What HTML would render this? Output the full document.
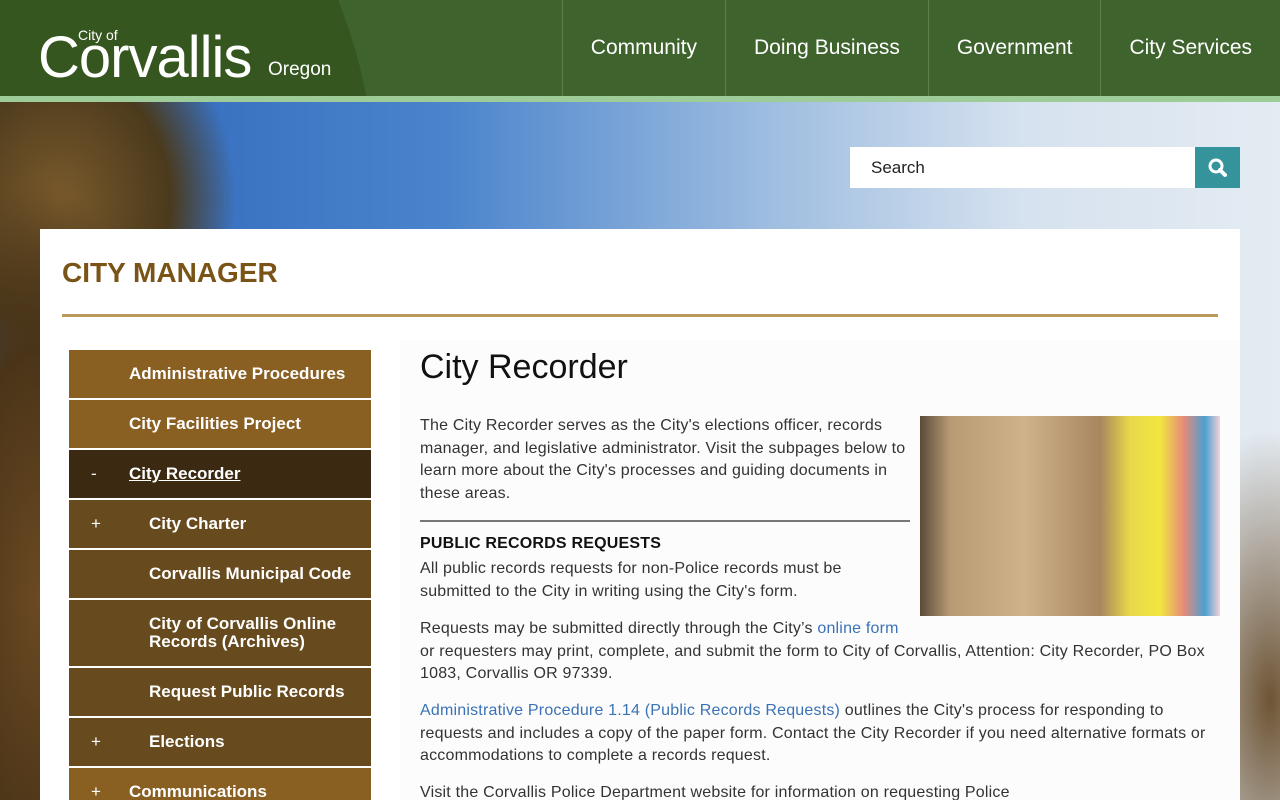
<!DOCTYPE html>
<html><head><meta charset="utf-8"><style>
*{margin:0;padding:0;box-sizing:border-box}
html,body{width:1280px;height:800px;overflow:hidden}
body{font-family:"Liberation Sans",sans-serif;position:relative;
background:
radial-gradient(ellipse 140px 420px at 40px 600px,#6b4a22 0%,#4a3418 60%,transparent 100%),
radial-gradient(ellipse 220px 260px at 60px 200px,#7a5a2c 0%,#4b3a1c 50%,transparent 80%),
radial-gradient(ellipse 120px 300px at 1270px 700px,#6e5434 0%,transparent 90%),
linear-gradient(90deg,#2a62b8 0%,#4b84cc 35%,#9ebde0 60%,#d6e2ef 80%,#e4ebf2 100%);}
.hdr{position:absolute;left:0;top:0;width:1280px;height:96px;background:#3f632d;overflow:hidden}
.hdr .curve{position:absolute;left:-190px;top:-200px;width:566px;height:400px;background:#36561f;border-radius:0 50% 0 0/0 100% 0 0}
.stripe{position:absolute;left:0;top:96px;width:1280px;height:6px;background:#9dcc98}
.logo{position:absolute;left:38px;top:22px;color:#fff;white-space:nowrap}
.logo .c{font-size:58px;font-weight:normal;letter-spacing:-1px;position:absolute;left:0;top:6px;line-height:60px}
.logo .of{position:absolute;left:40px;top:5px;font-size:14px}
.logo .or{position:absolute;left:230px;top:37px;font-size:19px}
.nav{position:absolute;top:0;right:0;height:96px;display:flex}
.nav div{border-left:1px solid #5c7f4b;height:96px;color:#fff;font-size:21px;display:flex;align-items:center;padding:0 28px}
.search{position:absolute;left:850px;top:147px;width:345px;height:41px;background:#fff;font-size:17px;color:#222;padding:11px 21px}
.sbtn{position:absolute;left:1195px;top:147px;width:45px;height:41px;background:#35939b}
.panel{position:absolute;left:40px;top:229px;width:1200px;height:571px;background:#fff}
.title{position:absolute;left:62px;top:257px;font-size:28px;font-weight:bold;color:#7a5316}
.rule{position:absolute;left:62px;top:314px;width:1156px;height:3px;background:#b9985a}
.side{position:absolute;left:69px;top:350px;width:302px}
.side div{background:#8a5f22;color:#fff;font-size:17px;font-weight:bold;height:48px;margin-bottom:2px;position:relative;padding-left:60px;display:flex;align-items:center;line-height:18px}
.side div.sub{background:#674a1d;padding-left:80px}
.side div.act{background:#3b2912}
.side div b{position:absolute;left:22px;font-weight:normal}
.main{position:absolute;left:400px;top:340px;width:840px;height:460px;background:#fcfcfc}
h1{position:absolute;left:420px;top:348px;font-size:34px;font-weight:normal;color:#111}
.txt{position:absolute;left:420px;font-size:16px;line-height:22.5px;color:#333;letter-spacing:0.2px}
a{color:#3a72b5;text-decoration:none}
.img{position:absolute;left:920px;top:416px;width:300px;height:200px;
background:linear-gradient(90deg,#5a4a3a 0%,#b89a74 10%,#cfb28a 35%,#a88660 60%,#e8d84a 70%,#f2e640 80%,#e58a7a 88%,#4aa0d0 95%,#f4d0d8 100%)}
</style></head><body>
<div class="hdr"><div class="curve"></div>
<div class="logo"><span class="of">City of</span><span class="c">Corvallis</span><span class="or">Oregon</span></div>
<div class="nav"><div>Community</div><div>Doing Business</div><div>Government</div><div>City Services</div></div>
</div>
<div class="stripe"></div>
<div class="search">Search</div>
<div class="sbtn"><svg width="45" height="41" viewBox="0 0 45 41"><circle cx="21" cy="19" r="6" fill="none" stroke="#fff" stroke-width="3"/><path d="M25 23l5 5" stroke="#fff" stroke-width="4" stroke-linecap="round"/></svg></div>
<div class="panel"></div>
<div class="title">CITY MANAGER</div>
<div class="rule"></div>
<div class="side">
<div>Administrative Procedures</div>
<div>City Facilities Project</div>
<div class="act"><b>-</b><u>City Recorder</u></div>
<div class="sub"><b>+</b>City Charter</div>
<div class="sub">Corvallis Municipal Code</div>
<div class="sub" style="height:66px">City of Corvallis Online<br>Records (Archives)</div>
<div class="sub">Request Public Records</div>
<div class="sub"><b>+</b>Elections</div>
<div><b>+</b>Communications</div>
</div>
<div class="main"></div>
<h1>City Recorder</h1>
<div class="img"></div>
<div class="txt" style="top:415px;width:490px">The City Recorder serves as the City's elections officer, records manager, and legislative administrator. Visit the subpages below to learn more about the City's processes and guiding documents in these areas.</div>
<div style="position:absolute;left:420px;top:520px;width:490px;height:2px;background:#777"></div>
<div class="txt" style="top:533px;font-weight:bold;color:#111">PUBLIC RECORDS REQUESTS</div>
<div class="txt" style="top:558px;width:450px">All public records requests for non-Police records must be submitted to the City in writing using the City's form.</div>
<div class="txt" style="top:618px;width:800px">Requests may be submitted directly through the City’s <a>online form</a><br>or requesters may print, complete, and submit the form to City of Corvallis, Attention: City Recorder, PO Box 1083, Corvallis OR 97339.</div>
<div class="txt" style="top:700px;width:800px"><a>Administrative Procedure 1.14 (Public Records Requests)</a> outlines the City's process for responding to requests and includes a copy of the paper form. Contact the City Recorder if you need alternative formats or accommodations to complete a records request.</div>
<div class="txt" style="top:782px;width:800px">Visit the Corvallis Police Department website for information on requesting Police</div>
</body></html>
